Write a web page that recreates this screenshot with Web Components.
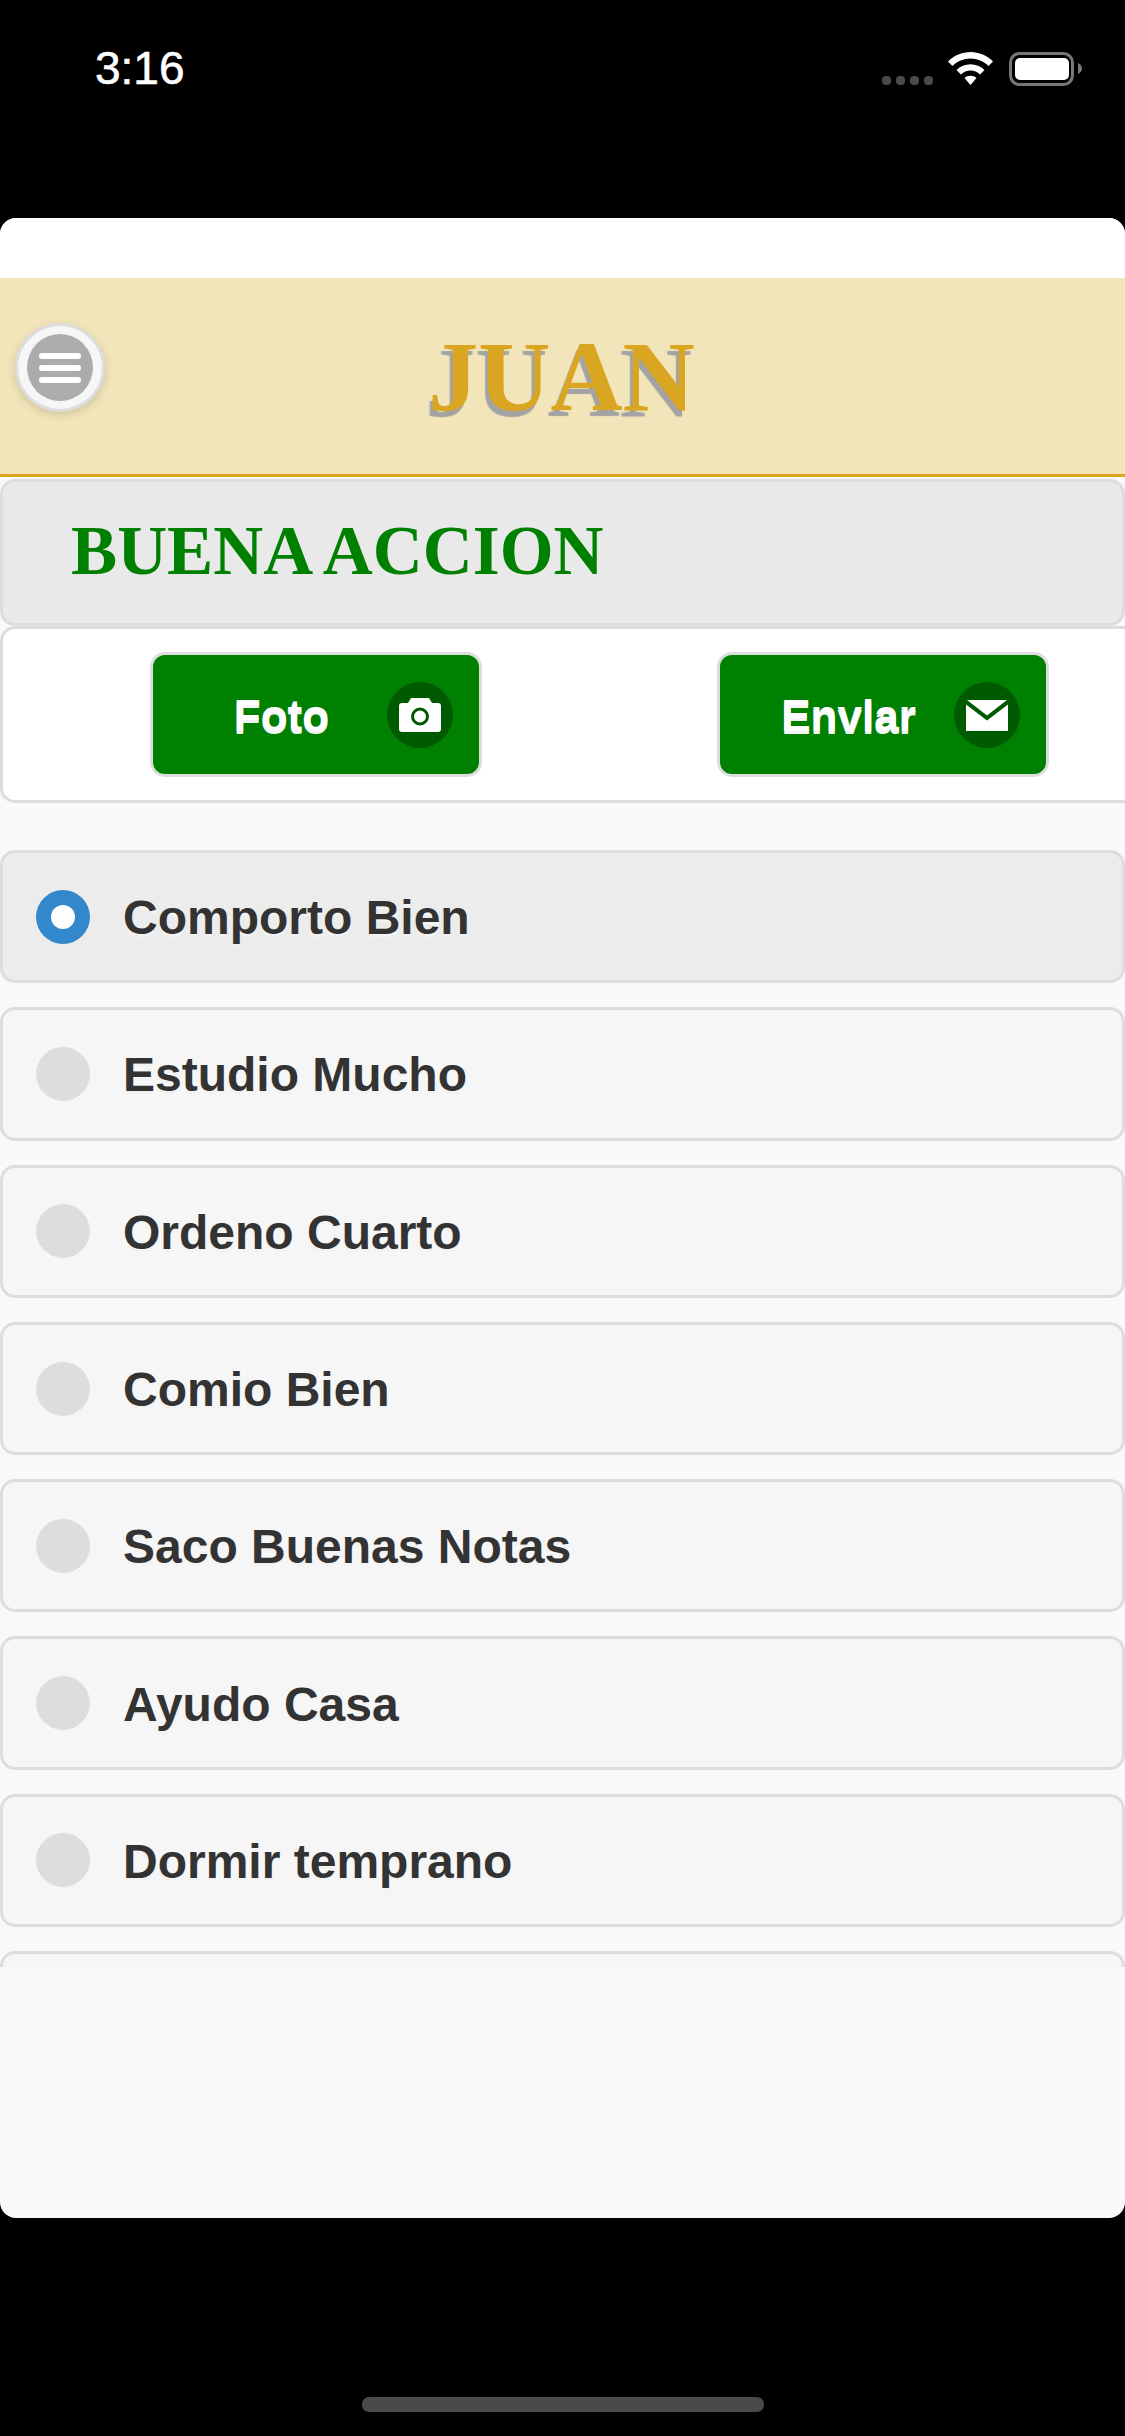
<!DOCTYPE html>
<html><head><meta charset="utf-8"><style>
html,body{margin:0;padding:0;background:#000;width:1125px;height:2436px;overflow:hidden}
</style></head><body>
<phone-app></phone-app>
<script>
function def(name, html){
  customElements.define(name, class extends HTMLElement{
    constructor(){super();this.attachShadow({mode:'open'}).innerHTML=html;}
  });
}
def('status-bar',`<style>
:host{display:flex;box-sizing:border-box;height:218px;padding:42px 43px 0 95px;align-items:flex-start;justify-content:space-between;color:#fff;font-family:"Liberation Sans",sans-serif}
.t{font-size:46px;line-height:53px;-webkit-text-stroke:.6px #fff}
svg{display:block;margin-top:8px}
</style><span class="t">3:16</span>
<svg width="200" height="40" viewBox="882 50 200 40" aria-hidden="true">
<g fill="#4a4a4a"><rect x="882" y="76" width="9" height="9" rx="4"/><rect x="896" y="76" width="9" height="9" rx="4"/><rect x="910" y="76" width="9" height="9" rx="4"/><rect x="924" y="76" width="9" height="9" rx="4"/></g>
<path fill="#fff" d="M948 61.500C954 55.500 962 52 970.500 52S987 55.500 993 61.500L988.500 66C983.700 61.300 977.300 58.500 970.500 58.500S957.300 61.300 952.500 66ZM956.500 70C960.300 66.300 965.200 64.200 970.500 64.200S980.700 66.300 984.500 70L980 74.500C977.400 72 974.100 70.600 970.500 70.600S963.600 72 961 74.500ZM964.500 78C966.100 76.500 968.200 75.700 970.500 75.700S974.900 76.500 976.500 78L970.500 85Z"/>
<rect x="1010.500" y="53.500" width="62" height="31" rx="9" fill="none" stroke="#777" stroke-width="3"/>
<rect x="1015" y="58" width="54" height="22" rx="5" fill="#fff"/>
<path fill="#777" d="M1078 63C1080.500 64 1082 66 1082 68.500S1080.500 73 1078 74Z"/>
</svg>`);
def('menu-button',`<style>
:host{display:flex;box-sizing:border-box;position:absolute;left:15px;top:45px;width:90px;height:89px;border-radius:50%;background:#f6f6f6;border:3px solid #ddd;box-shadow:0 3px 9px rgba(0,0,0,.15);align-items:center;justify-content:center}
.i{width:66px;height:67px;border-radius:50%;background:#acacac;display:flex;flex-direction:column;gap:6px;align-items:center;justify-content:center}
b{display:block;width:42px;height:6px;border-radius:3px;background:#fff}
</style><div class="i"><b></b><b></b><b></b></div>`);
def('app-header',`<style>
:host{display:block;position:relative;box-sizing:border-box;height:199px;background:#f2e5b9;border-bottom:3px solid #daa520;text-align:center;font:bold 100px/1 "Liberation Serif",serif;font-kerning:none;color:#daa520}
.t{display:block;padding:49px 2px 0 0;text-shadow:-3px 6px 1px #a3a3a3}
</style><slot name="menu"></slot><span class="t"><slot></slot></span>`);
def('section-title',`<style>
:host{display:block;box-sizing:border-box;height:147px;margin-top:2px;background:#e9e9e9;border:3px solid #ddd;border-radius:15px;padding:29px 0 0 68px;font:bold 69.2px/1.15 "Liberation Serif",serif;color:#008000}
</style><slot></slot>`);
def('action-bar',`<style>
:host{display:flex;box-sizing:border-box;height:177px;background:#fff;border:3px solid #ddd;border-right:0;border-radius:15px 0 0 15px;padding:23px 0 0 147px;gap:235px}
</style><slot></slot>`);
def('action-button',`<style>
:host{display:flex;box-sizing:border-box;width:332px;height:125px;background:#008000;border:3px solid #ddd;border-radius:15px;position:relative;align-items:center;justify-content:center;padding:2px 69px 0 0;color:#fff;font:bold 44px/1 "Liberation Sans",sans-serif;text-shadow:0 3px 0 #f3f3f3}
.c{position:absolute;right:26px;top:27px;width:66px;height:66px;border-radius:50%;background:#005a00;display:flex;align-items:center;justify-content:center}
svg{display:block}
</style><slot></slot><span class="c"><slot name="icon"></slot></span>`);
def('radio-item',`<style>
:host{display:flex;box-sizing:border-box;height:133.3px;background:#f6f6f6;border:3px solid #ddd;border-radius:15px;align-items:center;padding-left:33px;gap:33px;color:#333;font:bold 48px/1 "Liberation Sans",sans-serif;text-shadow:0 3px 0 #f3f3f3;flex:none}
:host([checked]){background:#ececec}
.r{flex:none;width:54px;height:54px;border-radius:50%;background:#ddd;display:flex;align-items:center;justify-content:center}
:host([checked]) .r{background:#3388cc}
:host([checked]) .r::after{content:"";width:24px;height:24px;border-radius:50%;background:#fff}
.l{padding-top:3px}
</style><span class="r"></span><span class="l"><slot></slot></span>`);
def('radio-list',`<style>
:host{display:flex;flex-direction:column;gap:24px;box-sizing:border-box;height:1164px;overflow:hidden;padding-top:47px}
</style><slot></slot>`);
def('app-panel',`<style>
:host{display:block;box-sizing:border-box;height:2000px;background:#f9f9f9;border-radius:16px;overflow:hidden}
.top{height:60px;background:#fff}
</style><div class="top"></div><slot name="header"></slot><slot></slot>`);
def('home-bar',`<style>
:host{display:block;box-sizing:border-box;padding-top:179px}
div{width:402px;height:15px;margin-left:362px;border-radius:7px;background:#4a4a4a}
</style><div></div>`);
def('phone-app',`<style>
:host{display:block;width:1125px;height:2436px;background:#000}
</style>
<status-bar></status-bar>
<app-panel>
<app-header slot="header"><menu-button slot="menu"></menu-button>JUAN</app-header>
<section-title>BUENA ACCION</section-title>
<action-bar>
<action-button>Foto<svg slot="icon" width="42" height="34" viewBox="0 0 42 34" aria-hidden="true"><path fill="#fff" d="M3 5h6l3-5h18l3 5h6a3 3 0 0 1 3 3v23a3 3 0 0 1-3 3H3a3 3 0 0 1-3-3V8a3 3 0 0 1 3-3Z"/><circle cx="21" cy="18.500" r="7.500" fill="#fff" stroke="#005a00" stroke-width="3"/></svg></action-button>
<action-button>Envlar<svg slot="icon" width="42" height="31" viewBox="0 0 42 31" aria-hidden="true"><path fill="#fff" d="M0 4.500 21 20.500 42 4.500V31H0ZM1 0H41L21 15.500Z"/></svg></action-button>
</action-bar>
<radio-list>
<radio-item checked>Comporto Bien</radio-item>
<radio-item>Estudio Mucho</radio-item>
<radio-item>Ordeno Cuarto</radio-item>
<radio-item>Comio Bien</radio-item>
<radio-item>Saco Buenas Notas</radio-item>
<radio-item>Ayudo Casa</radio-item>
<radio-item>Dormir temprano</radio-item>
<radio-item>&nbsp;</radio-item>
</radio-list>
</app-panel>
<home-bar></home-bar>`);
</script>
</body></html>
